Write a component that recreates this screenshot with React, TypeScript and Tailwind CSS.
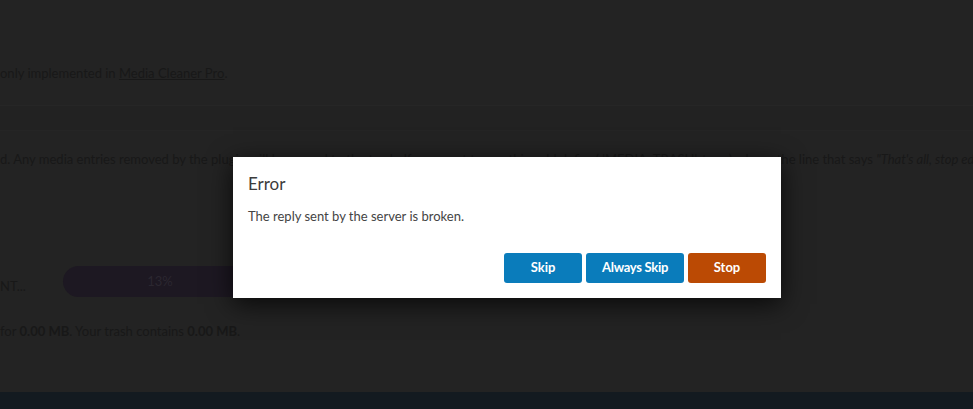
import React from 'react';

const font = { fontFamily: 'Lato, "Open Sans", sans-serif' };

function Background() {
  return (
    <div className="flex flex-col h-[409px] bg-[#232323] text-[13px] text-[#181818] overflow-hidden" style={font}>
      <div className="h-[105px] flex flex-col justify-end pb-[22px]">
        <p className="whitespace-nowrap">
          only implemented in <span className="underline">Media Cleaner Pro</span>.
        </p>
      </div>
      <div className="h-[25px] border-t border-[#262626] bg-[#222222]" />
      <div className="border-t border-[#252525] pt-[19px] h-[120px]">
        <p className="whitespace-nowrap">
          d. Any media entries removed by the plugin will be moved to the trash. If you want to use this, add define( 'MEDIA_TRASH', true ); above the line that says <em>"That's all, stop editing!"</em>
        </p>
      </div>
      <div className="flex items-end gap-[8px] h-[47px]">
        <span className="whitespace-nowrap w-[55px] pb-[1px]">NT...</span>
        <div className="w-[194px] h-[31px] rounded-full bg-[#1d1822] flex items-center justify-center text-[#2b2730]">
          13%
        </div>
      </div>
      <div className="h-[95px] pt-[25px]">
        <p className="whitespace-nowrap">
          for <b>0.00 MB</b>. Your trash contains <b>0.00 MB</b>.
        </p>
      </div>
      <div className="flex-1 bg-[#131a20]" />
    </div>
  );
}

export default function App() {
  return (
    <div className="relative w-[973px] h-[409px] overflow-hidden">
      <Background />
      <div className="absolute left-[233px] top-[157px] w-[548px] h-[141px] bg-white shadow-[0_6px_24px_rgba(0,0,0,0.75)] flex flex-col px-[15px] pt-[15px] pb-[15px]" style={font}>
        <h2 className="text-[17px] leading-[24px] text-[#3c3c3c]">Error</h2>
        <p className="mt-[11px] text-[13px] leading-[18px] text-[#444]">The reply sent by the server is broken.</p>
        <div className="mt-auto flex justify-end gap-[4px]">
          <button className="w-[78px] h-[30px] rounded-[3px] bg-[#0a7cbb] text-white text-[13px] font-bold">Skip</button>
          <button className="w-[98px] h-[30px] rounded-[3px] bg-[#0a7cbb] text-white text-[13px] font-bold tracking-[-0.3px]">Always Skip</button>
          <button className="w-[78px] h-[30px] rounded-[3px] bg-[#bb4a04] text-white text-[13px] font-bold">Stop</button>
        </div>
      </div>
    </div>
  );
}
